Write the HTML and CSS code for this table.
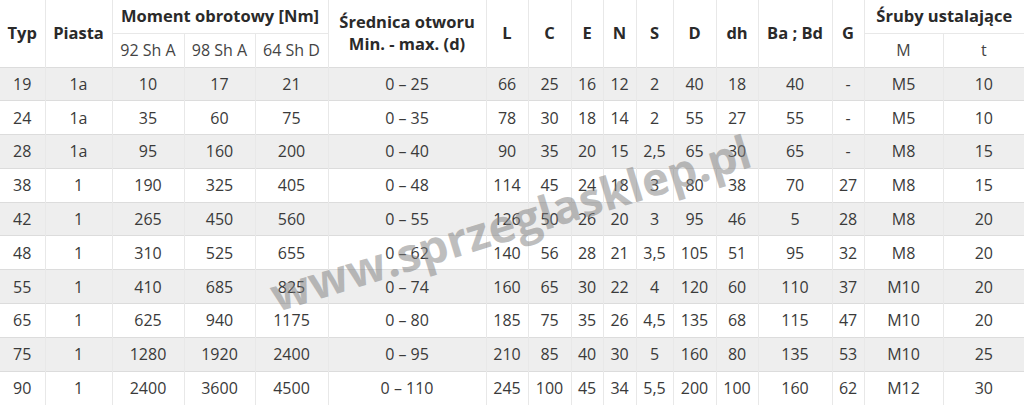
FILE: index.html
```html
<!DOCTYPE html>
<html lang="pl">
<head>
<meta charset="utf-8">
<title>Tabela sprzęgieł</title>
<link rel="stylesheet" href="styles.css">
</head>
<body>
<div class="wrap">
<table class="spec">
<colgroup>
<col class="c45"><col class="c67"><col class="c72"><col class="c71"><col class="c73"><col class="c158">
<col class="c42"><col class="c43"><col class="c32"><col class="c33"><col class="c37"><col class="c43">
<col class="c42"><col class="c74"><col class="c32"><col class="c79"><col class="c81">
</colgroup>
<thead>
<tr class="h1">
<th rowspan="2">Typ</th>
<th rowspan="2">Piasta</th>
<th colspan="3" class="grp">Moment obrotowy [Nm]</th>
<th rowspan="2" class="two">Średnica otworu<br>Min. - max. (d)</th>
<th rowspan="2">L</th>
<th rowspan="2">C</th>
<th rowspan="2">E</th>
<th rowspan="2">N</th>
<th rowspan="2">S</th>
<th rowspan="2">D</th>
<th rowspan="2">dh</th>
<th rowspan="2">Ba ; Bd</th>
<th rowspan="2">G</th>
<th colspan="2" class="grp">Śruby ustalające</th>
</tr>
<tr class="h2">
<th class="sub">92 Sh A</th>
<th class="sub">98 Sh A</th>
<th class="sub">64 Sh D</th>
<th class="sub">M</th>
<th class="sub">t</th>
</tr>
</thead>
<tbody>
<tr><td>19</td><td>1a</td><td>10</td><td>17</td><td>21</td><td>0 – 25</td><td>66</td><td>25</td><td>16</td><td>12</td><td>2</td><td>40</td><td>18</td><td>40</td><td>-</td><td>M5</td><td>10</td></tr>
<tr><td>24</td><td>1a</td><td>35</td><td>60</td><td>75</td><td>0 – 35</td><td>78</td><td>30</td><td>18</td><td>14</td><td>2</td><td>55</td><td>27</td><td>55</td><td>-</td><td>M5</td><td>10</td></tr>
<tr><td>28</td><td>1a</td><td>95</td><td>160</td><td>200</td><td>0 – 40</td><td>90</td><td>35</td><td>20</td><td>15</td><td>2,5</td><td>65</td><td>30</td><td>65</td><td>-</td><td>M8</td><td>15</td></tr>
<tr><td>38</td><td>1</td><td>190</td><td>325</td><td>405</td><td>0 – 48</td><td>114</td><td>45</td><td>24</td><td>18</td><td>3</td><td>80</td><td>38</td><td>70</td><td>27</td><td>M8</td><td>15</td></tr>
<tr><td>42</td><td>1</td><td>265</td><td>450</td><td>560</td><td>0 – 55</td><td>126</td><td>50</td><td>26</td><td>20</td><td>3</td><td>95</td><td>46</td><td>5</td><td>28</td><td>M8</td><td>20</td></tr>
<tr><td>48</td><td>1</td><td>310</td><td>525</td><td>655</td><td>0 – 62</td><td>140</td><td>56</td><td>28</td><td>21</td><td>3,5</td><td>105</td><td>51</td><td>95</td><td>32</td><td>M8</td><td>20</td></tr>
<tr><td>55</td><td>1</td><td>410</td><td>685</td><td>825</td><td>0 – 74</td><td>160</td><td>65</td><td>30</td><td>22</td><td>4</td><td>120</td><td>60</td><td>110</td><td>37</td><td>M10</td><td>20</td></tr>
<tr><td>65</td><td>1</td><td>625</td><td>940</td><td>1175</td><td>0 – 80</td><td>185</td><td>75</td><td>35</td><td>26</td><td>4,5</td><td>135</td><td>68</td><td>115</td><td>47</td><td>M10</td><td>20</td></tr>
<tr><td>75</td><td>1</td><td>1280</td><td>1920</td><td>2400</td><td>0 – 95</td><td>210</td><td>85</td><td>40</td><td>30</td><td>5</td><td>160</td><td>80</td><td>135</td><td>53</td><td>M10</td><td>25</td></tr>
<tr><td>90</td><td>1</td><td>2400</td><td>3600</td><td>4500</td><td>0 – 110</td><td>245</td><td>100</td><td>45</td><td>34</td><td>5,5</td><td>200</td><td>100</td><td>160</td><td>62</td><td>M12</td><td>30</td></tr>
</tbody>
</table>
<div class="watermark">www.sprzeglasklep.pl</div>
</div>
</body>
</html>
```
FILE: styles.css
```css
html, body {
  margin: 0;
  padding: 0;
  background: #ffffff;
}
.wrap {
  position: relative;
  width: 1024px;
  height: 406px;
  overflow: hidden;
}
.spec {
  width: 1024px;
  table-layout: fixed;
  border-collapse: collapse;
  font-family: "Open Sans", "Liberation Sans", sans-serif;
  font-size: 16px;
  color: #333333;
}
.c32 { width: 32px; }
.c33 { width: 33px; }
.c37 { width: 37px; }
.c42 { width: 42px; }
.c43 { width: 43px; }
.c45 { width: 45px; }
.c67 { width: 67px; }
.c71 { width: 71px; }
.c72 { width: 72px; }
.c73 { width: 73px; }
.c74 { width: 74px; }
.c79 { width: 79px; }
.c81 { width: 81px; }
.c158 { width: 158px; }
.spec th, .spec td {
  padding: 0;
  text-align: center;
  vertical-align: middle;
  border-left: 1px solid #e8e8e8;
  border-right: 1px solid #e8e8e8;
  white-space: nowrap;
}
.spec th:first-child, .spec td:first-child {
  border-left: none;
}
.spec tr > :last-child {
  border-right: none;
}
.spec th {
  font-weight: 700;
  font-size: 16.5px;
  line-height: 22px;
  color: #2a2a2a;
}
.spec .h1 { height: 33px; }
.spec .h2 { height: 34px; }
.spec .grp {
  border-bottom: 1px solid #e8e8e8;
}
.spec .sub {
  font-weight: 400;
  font-size: 16px;
  color: #444444;
}
.spec .h2 .sub:last-child {
  border-right: none;
}
.spec tbody tr {
  height: 33.8px;
  border-top: 1px solid #dcdcdc;
}
.spec tbody tr:nth-child(odd) {
  background: #eeeeee;
}
.spec td {
  color: #3a3a3a;
}
.watermark {
  position: absolute;
  left: 510px;
  top: 222px;
  transform: translate(-50%, -50%) rotate(-17deg);
  font-family: "Open Sans", "Liberation Sans", sans-serif;
  font-weight: 700;
  font-size: 46px;
  color: rgba(125, 125, 125, 0.5);
  white-space: nowrap;
  pointer-events: none;
}
```
